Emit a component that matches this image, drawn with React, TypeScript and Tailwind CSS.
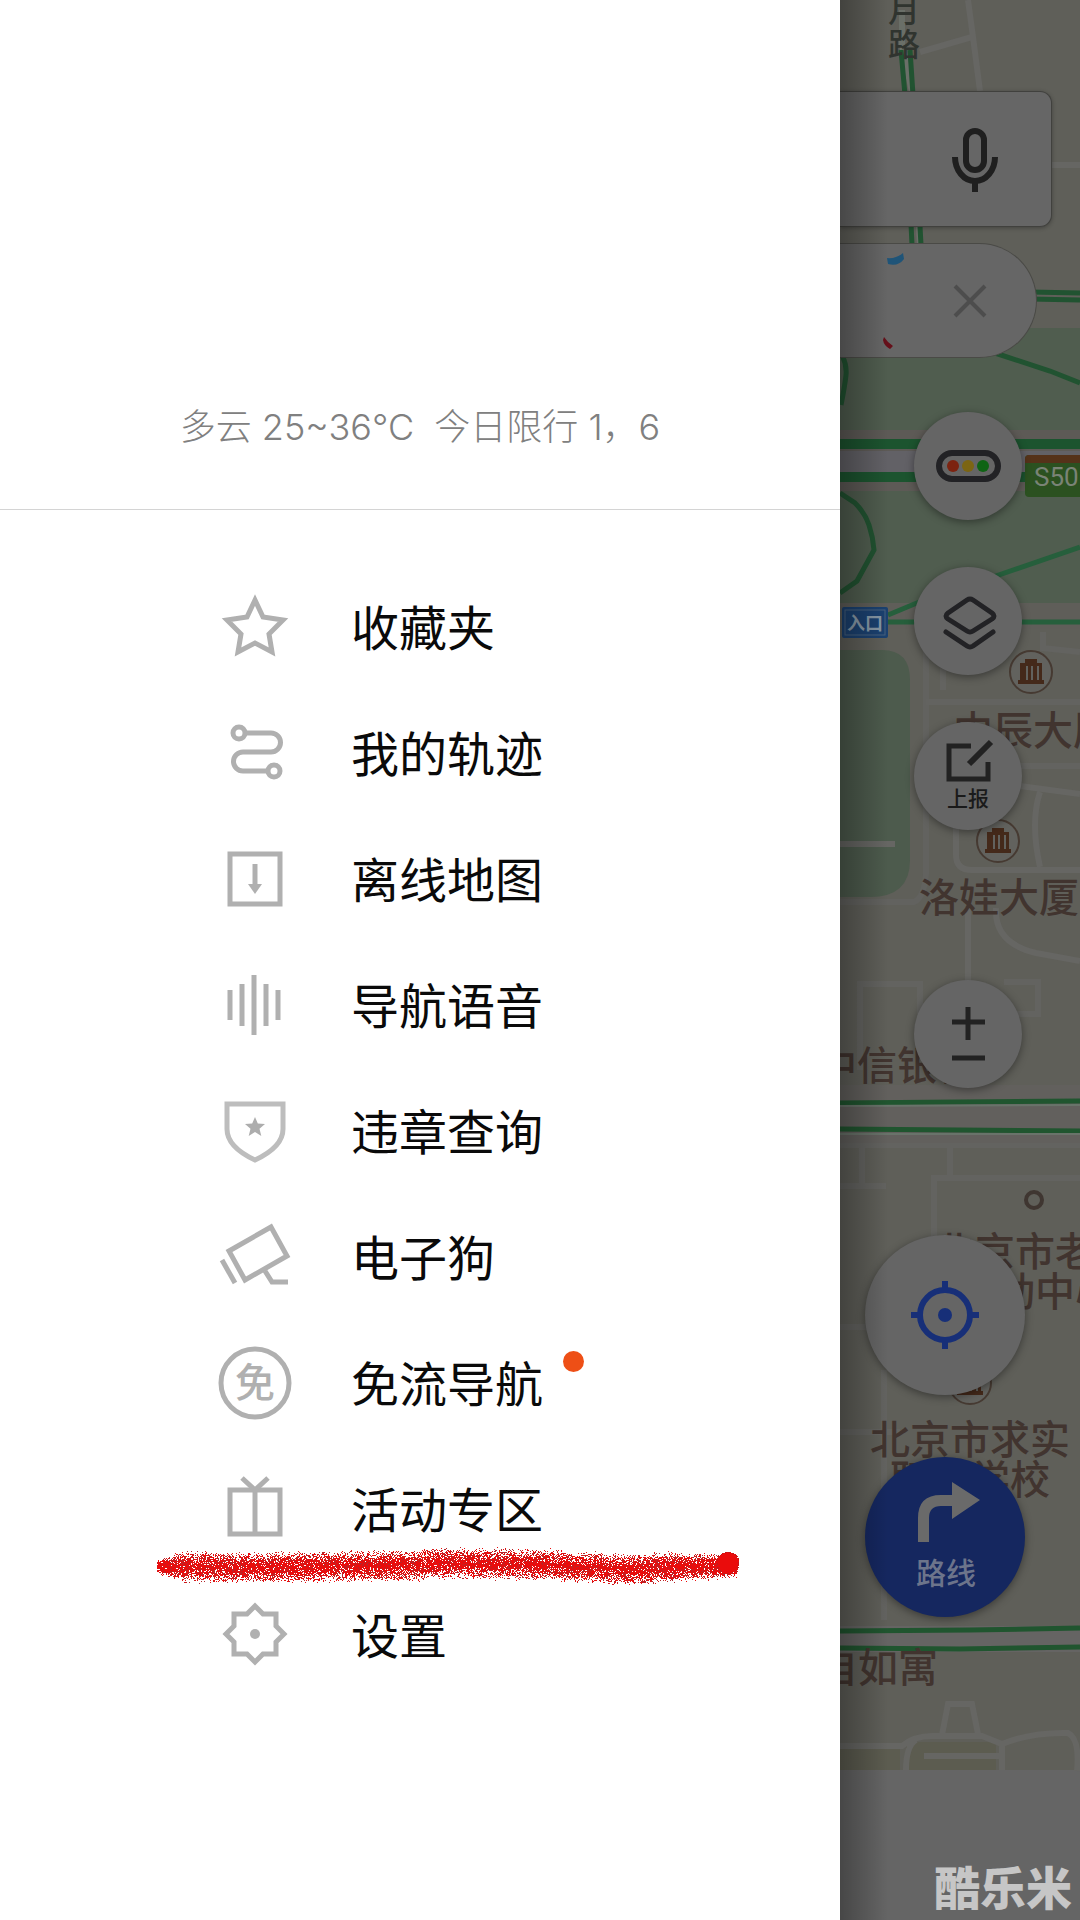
import React from 'react';

// Small seeded generator, keeps the spray marker identical on every render
function createRandom(seed: number) {
  let s = seed;
  return () => {
    s = (s * 1664525 + 1013904223) % 4294967296;
    return s / 4294967296;
  };
}

function buildSpray(count: number, seed: number): string {
  const rand = createRandom(seed);
  let d = '';
  for (let i = 0; i < count; i++) {
    const x = 4 + rand() * 580;
    const mid = 30 + Math.sin(x / 60) - (x > 270 && x < 410 ? 2 : 0) + (x > 450 && x < 500 ? 2 : 0);
    const edge = Math.min(1, 0.35 + (x - 4) / 40, 0.7 + (585 - x) / 240);
    const spread = (rand() + rand() - 1) * 15 * edge + (rand() - 0.5) * 4;
    d += `M${Math.round(x)} ${Math.round(mid + spread)}h1v1h-1z`;
  }
  return d;
}

const SPRAY_DARK = buildSpray(9000, 11);
const SPRAY_BRIGHT = buildSpray(13000, 47);

function MarkerStroke() {
  return (
    <svg
      viewBox="0 0 600 60"
      className="pointer-events-none absolute -bottom-6 left-[153px] h-[60px] w-[600px]"
      shapeRendering="crispEdges"
      aria-hidden="true"
    >
      <path d={SPRAY_DARK} fill="#b3262a" />
      <path d={SPRAY_BRIGHT} fill="#ea0c0c" />
      <circle cx="575" cy="27" r="11" fill="#ea0c0c" stroke="#c01a1c" strokeWidth="1" strokeDasharray="2 2" />
    </svg>
  );
}

const icons = {
  star: <path d="M40 13l8 17 20 3-14 14 3 18-17-9-17 9 3-18-14-14 20-3z" />,
  track: (
    <>
      <circle cx="24" cy="20" r="6" />
      <circle cx="59" cy="58" r="6" />
      <path d="M30 20h26a9.500 9.500 0 0 1 0 19H28a9.500 9.500 0 0 0 0 19h25" />
    </>
  ),
  download: (
    <>
      <path d="M15 15h50v50H15z" />
      <path d="M40 25v21" />
      <path d="M33 45h14l-7 10z" fill="currentColor" stroke="none" />
    </>
  ),
  voice: <path d="M15 25v30M27 19v42M39 10v60M51 19v42M63 25v30" />,
  shield: (
    <g className="text-[#bdbdbd]" stroke="currentColor">
      <path d="M12 13h56v25c0 14-13 24-28 31-15-7-28-17-28-31z" />
      <path
        d="M40 26l2.800 6.500 7.200.5-5.500 4.800 1.800 7.200-6.300-4-6.300 4 1.800-7.200-5.500-4.800 7.200-.5z"
        fill="#adadad"
        stroke="none"
      />
    </g>
  ),
  camera: (
    <>
      <path d="M14 34l42-24 16 29-42 24z" />
      <path d="M7 43l13 23" />
      <path d="M50 54l7 11h16" />
    </>
  ),
  free: (
    <>
      <circle cx="40" cy="40" r="34" />
      <text
        x="40"
        y="54"
        textAnchor="middle"
        className="text-[40px] font-medium"
        fill="currentColor"
        stroke="none"
      >
        免
      </text>
    </>
  ),
  gift: (
    <>
      <path d="M15 21h50v44H15z" />
      <path d="M40 21v44" />
      <path d="M27 9l13 12L53 9" />
    </>
  ),
  settings: (
    <>
      <path d="M40 11l8 8h13v12l8 8-8 8v12H48l-8 8-8-8H19V47l-8-8 8-8V19h13z" />
      <circle cx="40" cy="39" r="5" fill="currentColor" stroke="none" />
    </>
  ),
};

type MenuItem = {
  label: string;
  icon: keyof typeof icons;
  hasDot?: boolean;
  marked?: boolean;
};

const menuItems: MenuItem[] = [
  { label: '收藏夹', icon: 'star' },
  { label: '我的轨迹', icon: 'track' },
  { label: '离线地图', icon: 'download' },
  { label: '导航语音', icon: 'voice' },
  { label: '违章查询', icon: 'shield' },
  { label: '电子狗', icon: 'camera' },
  { label: '免流导航', icon: 'free', hasDot: true },
  { label: '活动专区', icon: 'gift', marked: true },
  { label: '设置', icon: 'settings' },
];

function Drawer() {
  return (
    <nav className="min-w-0 bg-white">
      <header className="flex h-[510px] items-end justify-center border-b border-[#d4d4d4] pb-[58px]">
        <p className="font-['Inter','Noto_Sans_CJK_SC',sans-serif] text-[36px] leading-[48px] font-light whitespace-pre text-[#808080]">
          {'多云 25~36℃  今日限行 1，6'}
        </p>
      </header>

      <ul className="pt-[54px]">
        {menuItems.map((item) => (
          <li key={item.label} className="relative">
            <button type="button" className="flex h-[126px] w-full cursor-pointer items-center gap-14 pl-[215px]">
              <svg
                viewBox="0 0 80 80"
                className="size-20 shrink-0 text-[#b0b0b0]"
                fill="none"
                stroke="currentColor"
                strokeWidth="5"
                aria-hidden="true"
              >
                {icons[item.icon]}
              </svg>
              <span className="relative pb-1 text-[48px] leading-[64px] text-[#0a0a0a]">
                {item.label}
                {item.hasDot && (
                  <span className="absolute top-0.5 left-full ml-5 size-[21px] rounded-full bg-[#ee4f16]" />
                )}
              </span>
            </button>
            {item.marked && <MarkerStroke />}
          </li>
        ))}
      </ul>
    </nav>
  );
}

function Building({ x, y }: { x: number; y: number }) {
  return (
    <g transform={`translate(${x} ${y})`}>
      <circle r="21" fill="#62625e" stroke="#463a32" strokeWidth="2" />
      <path d="M-13 8h26v4h-26zM-11-9h5v-4H6v4h5V9h-3V-6H6V9H2V-6H0V9h-3V-6h-2V9h-6z" fill="#44291a" />
    </g>
  );
}

function MapCanvas() {
  return (
    <svg
      viewBox="0 0 240 1920"
      preserveAspectRatio="xMinYMin slice"
      className="absolute inset-0 size-full"
      fill="none"
      aria-hidden="true"
    >
      <path d="M0 0h240v1770H0z" fill="#5f5f59" />

      {/* parks */}
      <path d="M0 350h165l20-22h55v275H0z" fill="#505d4f" />
      <path d="M0 650h42q28 0 28 30v180q0 37-40 37H0z" fill="#4d5b4d" />
      <path d="M0 1749h60v21H0zM66 1742h90v28H66z" fill="#5c5c50" />

      {/* side streets */}
      <g stroke="#666663" strokeWidth="6">
        <path d="M128 0l5 37 7 54M80 52l52-15" />
        <path d="M212 165h28" />
        <path d="M0 844h55" />
        <path d="M0 902h74q10-4 12-28V640q-4-20-30-26H0" stroke="#62625f" />
        <path d="M103 690v-56M86 702h154M203 632v16l37 4M180 766h60" stroke="#636360" />
        <path d="M116 825v30q0 15 16 15h108M180 786l60 8M200 792q-10 30 0 75" />
        <path d="M128 908v80M156 908q-2 35 40 45l44 8" />
        <path d="M20 1070v-86h60v30M164 982h34v32h-34" stroke="#636360" />
        <path d="M0 1186h46M22 1186v-40M0 1145h240M110 1145v34M240 1178H94v70M0 1327h40M44 1370v250M0 1432h60" stroke="#636360" />
        <path d="M102 1735l6-31h24l6 30M0 1746h62q12-10 30-10h50l20 8q30-12 66-11 12 6 9 38M66 1770q0-24 10-30M84 1756h76M162 1744v26" />
      </g>

      {/* main roads */}
      <path d="M62 10v35l11 52 7 150" stroke="#6a6f68" strokeWidth="6" />
      <g stroke="#215331" strokeWidth="5">
        <path d="M61 50l4 45 7 150M70 50l3 45 8 150" />
        <path d="M190 292l50 1M190 299l50 1" />
        <path d="M2 355q5 10 4 20t-5 30M155 353l55 18 30 12" />
        <path d="M0 493l15 10q10 10 14 22t5 25l-17 31-17 12" />
      </g>
      <path d="M0 430h240v61H0z" fill="#5d5a56" />
      <path d="M0 451h240v21H0z" fill="#626166" />
      <path d="M0 444h240M0 477h240" stroke="#1c542f" strokeWidth="10" />
      <path d="M0 603h240v26H0z" fill="#5f5e59" />
      <path d="M45 622h195" stroke="#265f3c" strokeWidth="5" />
      <path d="M48 615l36-15M150 578l90-31" stroke="#265f3c" strokeWidth="5" />
      <path d="M0 1085h240v58H0z" fill="#62605d" />
      <path d="M0 1103l240-2M0 1129l240 2" stroke="#20552f" strokeWidth="5" />
      <path d="M0 1106l240-1M0 1134h240" stroke="#69736a" strokeWidth="2" />
      <path d="M0 1626h240v26H0z" fill="#656463" />
      <path d="M0 1631l130-1 110-2M0 1648l120 1 120-2" stroke="#20552f" strokeWidth="5" />

      {/* road signs */}
      <rect x="2" y="607" width="46" height="31" rx="2" fill="#1b4170" />
      <rect x="5" y="610" width="40" height="25" stroke="#48627e" />
      <text x="25" y="630" textAnchor="middle" className="text-[18px] font-bold" fill="#8798a6">入口</text>
      <rect x="185" y="455" width="70" height="42" rx="4" fill="#2b5120" />
      <path d="M185 463v-4q0-4 4-4h51v8z" fill="#553219" />
      <text x="194" y="486" className="font-['Roboto',sans-serif] text-[26px]" fill="#7a8376">S50</text>

      <Building x={191} y={672} />
      <Building x={158} y={841} />
      <Building x={130} y={1383} />
      <circle cx="194" cy="1200" r="8" stroke="#3f3631" strokeWidth="4" />

      {/* place names */}
      <g className="text-[32px] font-medium" fill="#30342f">
        <text x="48" y="22">月</text>
        <text x="48" y="56">路</text>
      </g>
      <g className="text-[40px] font-medium" fill="#41342f">
        <text x="113" y="745">中辰大厦</text>
        <text x="79" y="912">洛娃大厦</text>
        <text x="-23" y="1080">中信银行</text>
        <text x="95" y="1266">北京市老</text>
        <text x="115" y="1306">活动中心</text>
        <text x="30" y="1454">北京市求实</text>
        <text x="50" y="1494">职业学校</text>
        <text x="-22" y="1682">自如寓</text>
      </g>
    </svg>
  );
}

const roundButton =
  'flex size-[108px] cursor-pointer items-center justify-center rounded-full bg-[#656565] shadow-[0_2px_8px_rgba(0,0,0,0.4)]';

function MapControls() {
  return (
    <div className="relative flex flex-col pt-[91px]">
      <div className="mr-7 flex h-[136px] items-center justify-end rounded-r-xl border border-l-0 border-[#41413e] bg-[#666] pr-[53px] shadow-[0_1px_4px_rgba(0,0,0,0.3)]">
        <button type="button" aria-label="语音搜索" className="cursor-pointer">
          <svg viewBox="0 0 46 66" className="h-[66px] w-[46px]" fill="none" stroke="#1f1f1f" strokeWidth="6">
            <rect x="14" y="5" width="18" height="39" rx="9" />
            <path d="M3 31a20 24 0 0 0 40 0M23 55v11" />
          </svg>
        </button>
      </div>

      <div className="relative mt-4 mr-[43px] flex h-[115px] items-center justify-end rounded-r-full border border-l-0 border-[#4a4a46] bg-[#666] pr-[49px]">
        <svg viewBox="0 0 100 114" className="absolute top-0 left-0 h-[114px] w-[100px]" aria-hidden="true">
          <path d="M47 14q9 1 16-5l1 6q-6 8-16 5z" fill="#1f5478" />
          <path d="M44 93q4 6 9 9l-3 3q-6-3-7-9z" fill="#66101a" />
        </svg>
        <button type="button" aria-label="关闭" className="cursor-pointer">
          <svg viewBox="0 0 34 34" className="size-[34px]" fill="none" stroke="#4d4d4d" strokeWidth="4">
            <path d="M2 2l30 30M32 2L2 32" />
          </svg>
        </button>
      </div>

      <div className="mt-[54px] mr-[58px] flex flex-col items-end gap-[47px]">
        <button type="button" aria-label="路况" className={roundButton}>
          <svg viewBox="0 0 108 108" className="size-full" fill="none">
            <rect x="25" y="41" width="59" height="26" rx="13" stroke="#222225" strokeWidth="6" />
            <circle cx="39" cy="54" r="6" fill="#7c2310" />
            <circle cx="54" cy="54" r="6" fill="#7c6512" />
            <circle cx="69" cy="54" r="6" fill="#0f6414" />
          </svg>
        </button>
        <button type="button" aria-label="图层" className={roundButton}>
          <svg
            viewBox="0 0 108 108"
            className="size-full"
            fill="none"
            stroke="#222225"
            strokeWidth="5"
            strokeLinecap="round"
            strokeLinejoin="round"
          >
            <path d="M53 33q3-2 6 0l19 13q4 3 0 6L59 64q-3 2-6 0L34 52q-4-3 0-6z" />
            <path d="M32 65l21 14q3 2 6 0l20-14" />
          </svg>
        </button>
        <button type="button" className={roundButton}>
          <svg viewBox="0 0 108 108" className="size-full" fill="none" stroke="#222" strokeWidth="5">
            <path d="M57 24H35v33h39V40" />
            <path d="M55 42l22-22" strokeWidth="6" />
            <text x="54" y="84" textAnchor="middle" className="text-[21px] font-medium" fill="#1a1a1a" stroke="none">上报</text>
          </svg>
        </button>
      </div>

      <div className="mt-[150px] mr-[58px] flex justify-end">
        <button type="button" aria-label="缩放" className={roundButton}>
          <svg viewBox="0 0 108 108" className="size-full" fill="none" stroke="#222" strokeWidth="5">
            <path d="M38 42h33M54 27v33M38 78h33" />
          </svg>
        </button>
      </div>

      <div className="mt-[147px] mr-[55px] flex flex-col items-end gap-[62px]">
        <button
          type="button"
          aria-label="定位"
          className="size-40 cursor-pointer rounded-full bg-[#656565] shadow-[0_2px_8px_rgba(0,0,0,0.4)]"
        >
          <svg viewBox="0 0 160 160" className="size-full" fill="none" stroke="#172f78" strokeWidth="6">
            <circle cx="80" cy="80" r="25" />
            <circle cx="80" cy="80" r="7" fill="#172f78" stroke="none" />
            <path d="M80 46v8M80 106v8M46 80h8M106 80h8" />
          </svg>
        </button>
        <button
          type="button"
          className="size-40 cursor-pointer rounded-full bg-[#15275f] shadow-[0_2px_8px_rgba(0,0,0,0.4)]"
        >
          <svg viewBox="0 0 160 160" className="size-full" fill="#6a6a6a">
            <path d="M53 85V61q0-23 23-23h11V25l28 18-28 19V49H76q-12 0-12 12v24z" />
            <text x="81" y="127" textAnchor="middle" className="text-[30px] font-medium" fill="#6c748b">路线</text>
          </svg>
        </button>
      </div>
    </div>
  );
}

export default function App() {
  return (
    <div className="grid min-h-screen grid-cols-[7fr_2fr] bg-white font-['Noto_Sans_CJK_SC',sans-serif]">
      <Drawer />
      <main className="relative min-w-0 overflow-hidden bg-[#656565]">
        <MapCanvas />
        <MapControls />
        {/* shadow cast by the open drawer */}
        <div className="pointer-events-none absolute inset-y-0 left-0 w-12 bg-linear-to-r from-black/30 to-transparent" />
        <p className="absolute right-2 bottom-2 text-[46px] leading-[54px] font-black text-[#c6c6c6]">酷乐米</p>
      </main>
    </div>
  );
}
